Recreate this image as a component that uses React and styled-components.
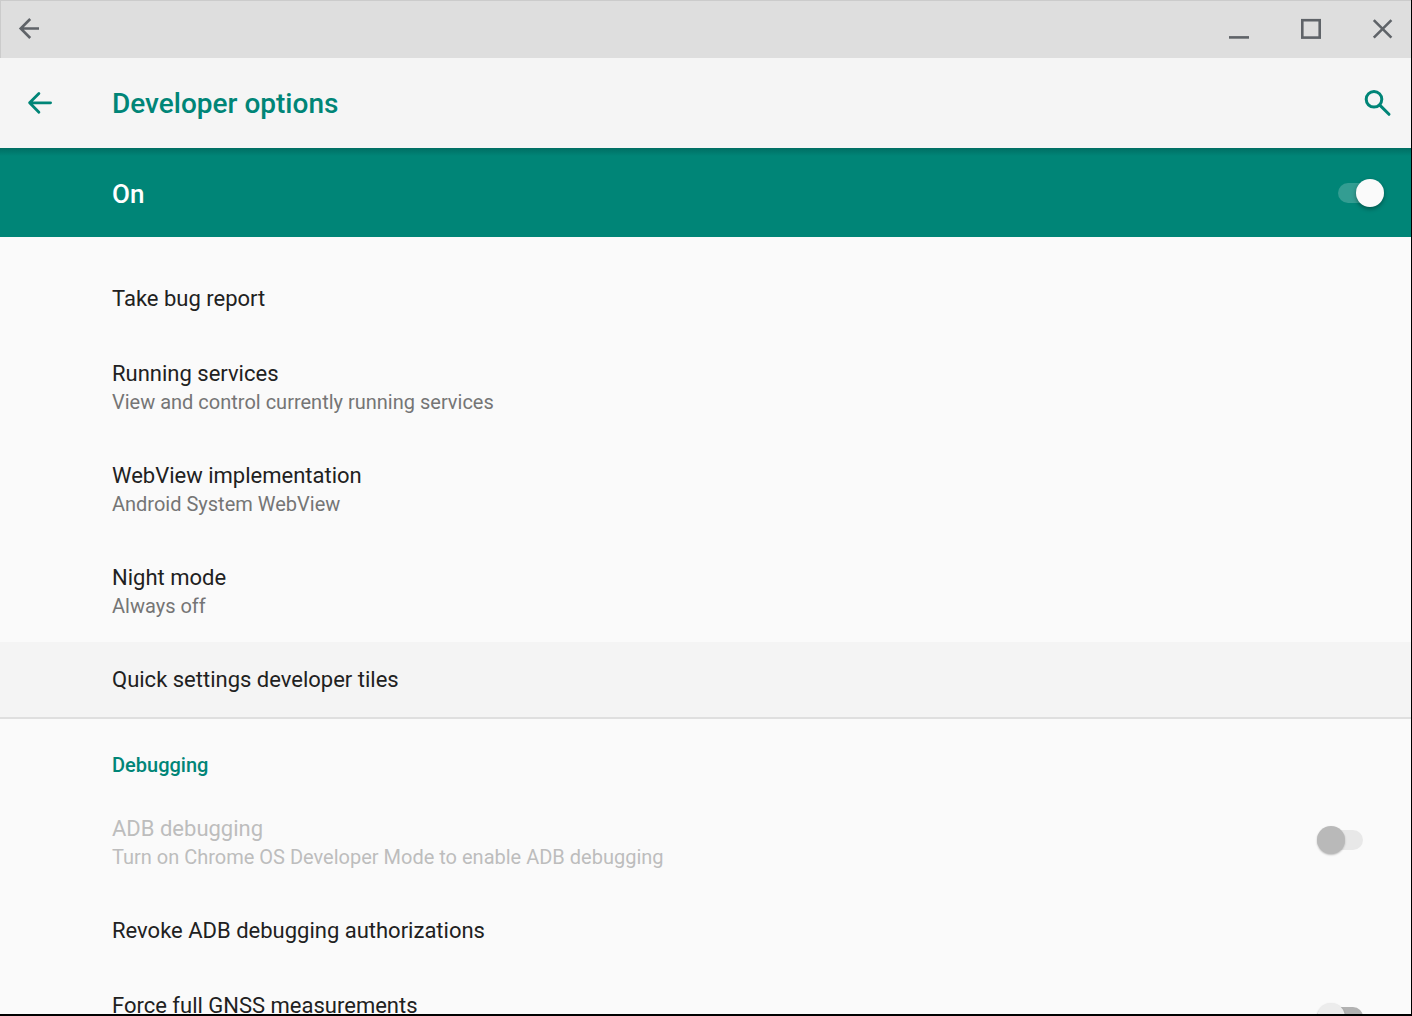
import React, { useState } from "react";
import styled, { createGlobalStyle, css } from "styled-components";

const teal = "#008577";

const GlobalStyle = createGlobalStyle`
  *, *::before, *::after { box-sizing: border-box; }
  body {
    margin: 0;
    background: #000;
    font-family: Roboto, "Noto Sans", sans-serif;
  }
`;

const Window = styled.div`
  display: flex;
  flex-direction: column;
  height: 100vh;
  overflow: hidden;
  background: #fafafa;
  border-right: 1px solid #000;
  border-bottom: 2px solid #000;
`;

const TitleBar = styled.div`
  display: flex;
  flex: none;
  align-items: center;
  justify-content: space-between;
  height: 58px;
  padding: 0 8px 0 9px;
  background: #dedede;
  box-shadow: inset 1px 1px 0 #cbcbcb;
`;

const WindowControls = styled.div`
  display: flex;
  gap: 32px;
`;

const IconButton = styled.button`
  display: flex;
  flex: none;
  align-items: center;
  justify-content: center;
  width: 40px;
  height: 40px;
  padding: 0;
  border: 0;
  background: none;
  color: ${(p) => (p.$accent ? teal : "#5f6368")};
  cursor: pointer;
`;

const AppBar = styled.header`
  display: flex;
  flex: none;
  align-items: center;
  height: 90px;
  padding: 0 13px 0 20px;
  background: #f5f5f5;
`;

const PageTitle = styled.h1`
  flex: 1;
  margin: 0;
  padding: 2px 0 0 52px;
  font-size: 28px;
  font-weight: 500;
  line-height: 32px;
  color: ${teal};
`;

const MasterSwitch = styled.div`
  display: flex;
  flex: none;
  align-items: center;
  justify-content: space-between;
  height: 89px;
  padding: 0 27px 0 112px;
  background: linear-gradient(#006e63, ${teal} 8px);
`;

const MasterLabel = styled.label`
  padding-top: 2px;
  font-size: 26px;
  font-weight: 500;
  line-height: 32px;
  color: #fff;
`;

const Toggle = styled.input.attrs({ type: "checkbox", role: "switch" })`
  appearance: none;
  position: relative;
  flex: none;
  width: 46px;
  height: 20px;
  margin: 0;
  border-radius: 10px;
  background: #b2b2b2;
  cursor: pointer;

  &::before {
    content: "";
    position: absolute;
    top: -4px;
    left: 0;
    width: 28px;
    height: 28px;
    border-radius: 50%;
    background: #ececec;
    box-shadow: 0 1px 2px rgba(0, 0, 0, 0.25);
  }

  &:checked {
    background: ${(p) => (p.$onAccent ? "#339d92" : "#99cec9")};
  }

  &:checked::before {
    left: 18px;
    background: ${(p) => (p.$onAccent ? "#fafafa" : teal)};
    box-shadow: 0 2px 4px rgba(0, 0, 0, 0.35);
  }

  &:disabled {
    background: #e8e8e8;
    cursor: default;
  }

  &:disabled::before {
    background: #b9b9b9;
  }
`;

const Content = styled.main`
  flex: 1;
  min-height: 0;
  overflow: hidden;
  padding-top: 24px;
`;

const Section = styled.section`
  & + & {
    border-top: 2px solid #dfdfdf;
  }
`;

const SectionTitle = styled.h2`
  margin: 0;
  padding: 32px 112px 12px;
  font-size: 20px;
  font-weight: 500;
  line-height: 28px;
  color: ${teal};
`;

const rowStyle = css`
  display: flex;
  align-items: center;
  justify-content: space-between;
  width: 100%;
  padding: 22px 48px 22px 112px;
  border: 0;
  background: ${(p) => (p.$highlighted ? "#f4f4f4" : "transparent")};
  font-family: inherit;
  text-align: left;
`;

const ActionRow = styled.button`
  ${rowStyle}
  cursor: pointer;
`;

const RowText = styled.span`
  display: flex;
  flex-direction: column;
`;

const ToggleRow = styled.div`
  ${rowStyle}

  ${RowText} {
    min-height: 58px;
  }

  ${Toggle} {
    margin-bottom: 4px;
  }
`;

const RowTitle = styled.span`
  font-size: 22px;
  line-height: 31px;
  color: ${(p) => (p.$disabled ? "#bdbdbd" : "#212121")};
`;

const RowSummary = styled.span`
  font-size: 20px;
  line-height: 27px;
  color: ${(p) => (p.$disabled ? "#bdbdbd" : "#757575")};
`;

function Glyph({ width, children }) {
  return (
    <svg
      width="40"
      height="40"
      viewBox="0 0 40 40"
      fill="none"
      stroke="currentColor"
      strokeWidth={width}
      aria-hidden="true"
    >
      {children}
    </svg>
  );
}

function Action({ title, summary, highlighted }) {
  return (
    <ActionRow type="button" $highlighted={highlighted}>
      <RowText>
        <RowTitle>{title}</RowTitle>
        {summary && <RowSummary>{summary}</RowSummary>}
      </RowText>
    </ActionRow>
  );
}

function Setting({ id, title, summary, disabled }) {
  const [on, setOn] = useState(false);
  return (
    <ToggleRow>
      <RowText>
        <RowTitle as="label" htmlFor={id} $disabled={disabled}>
          {title}
        </RowTitle>
        {summary && <RowSummary $disabled={disabled}>{summary}</RowSummary>}
      </RowText>
      <Toggle
        id={id}
        checked={on}
        disabled={disabled}
        onChange={(e) => setOn(e.target.checked)}
      />
    </ToggleRow>
  );
}

export default function App() {
  const [enabled, setEnabled] = useState(true);
  return (
    <>
      <GlobalStyle />
      <Window>
        <TitleBar>
          <IconButton type="button" aria-label="Back">
            <Glyph width={2.6}>
              <path d="M30 19.5H11.5M21.2 10L11.7 19.5L21.2 29" />
            </Glyph>
          </IconButton>
          <WindowControls>
            <IconButton type="button" aria-label="Minimize">
              <Glyph width={2.6}>
                <path d="M10 28.4H30" />
              </Glyph>
            </IconButton>
            <IconButton type="button" aria-label="Maximize">
              <Glyph width={2.6}>
                <rect x="11.3" y="11.2" width="17.4" height="17.4" />
              </Glyph>
            </IconButton>
            <IconButton type="button" aria-label="Close">
              <Glyph width={2.6}>
                <path d="M10.8 11.1L28.4 28.7M28.4 11.1L10.8 28.7" />
              </Glyph>
            </IconButton>
          </WindowControls>
        </TitleBar>

        <AppBar>
          <IconButton type="button" aria-label="Navigate up" $accent>
            <Glyph width={2.8}>
              <path
                d="M30.6 19.8H9.8M18.9 10.4L9.6 19.8L18.9 29.2"
                strokeLinecap="round"
                strokeLinejoin="round"
              />
            </Glyph>
          </IconButton>
          <PageTitle>Developer options</PageTitle>
          <IconButton type="button" aria-label="Search" $accent>
            <Glyph width={3}>
              <circle cx="16" cy="16.3" r="7.8" />
              <path d="M21.8 22.1L31 31.3" strokeLinecap="round" />
            </Glyph>
          </IconButton>
        </AppBar>

        <MasterSwitch>
          <MasterLabel htmlFor="developer-options">
            {enabled ? "On" : "Off"}
          </MasterLabel>
          <Toggle
            id="developer-options"
            $onAccent
            checked={enabled}
            onChange={(e) => setEnabled(e.target.checked)}
          />
        </MasterSwitch>

        <Content>
          <Section>
            <Action title="Take bug report" />
            <Action
              title="Running services"
              summary="View and control currently running services"
            />
            <Action
              title="WebView implementation"
              summary="Android System WebView"
            />
            <Action title="Night mode" summary="Always off" />
            <Action title="Quick settings developer tiles" highlighted />
          </Section>
          <Section>
            <SectionTitle>Debugging</SectionTitle>
            <Setting
              id="adb-debugging"
              title="ADB debugging"
              summary="Turn on Chrome OS Developer Mode to enable ADB debugging"
              disabled
            />
            <Action title="Revoke ADB debugging authorizations" />
            <Setting id="force-gnss" title="Force full GNSS measurements" />
          </Section>
        </Content>
      </Window>
    </>
  );
}
